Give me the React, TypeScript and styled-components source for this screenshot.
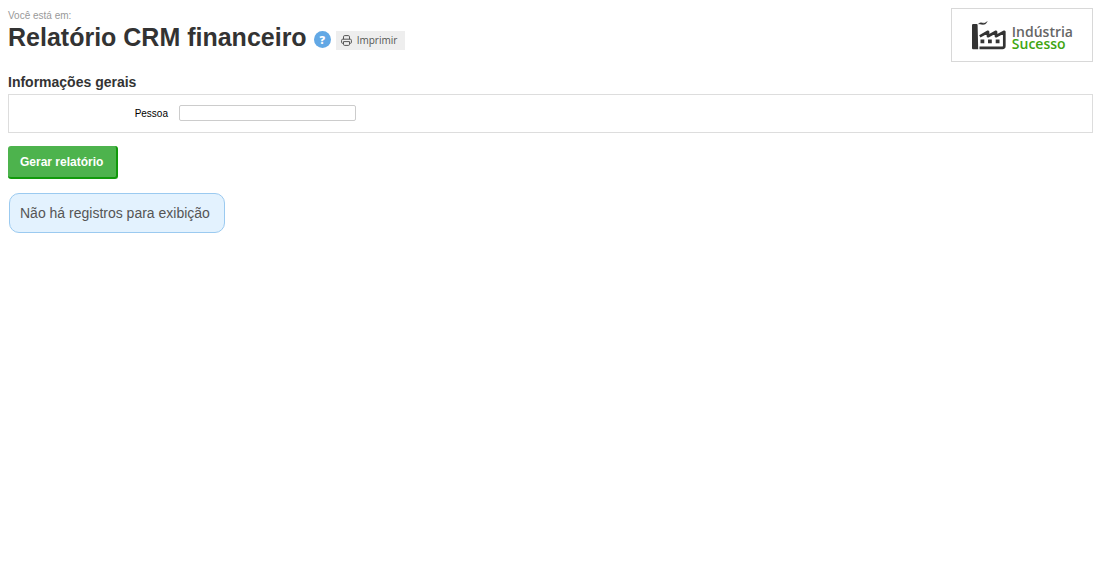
import React from 'react';
import styled, { createGlobalStyle } from 'styled-components';

const GlobalStyle = createGlobalStyle`
  *, *::before, *::after { box-sizing: border-box; }
  body {
    margin: 0;
    background: #fff;
    color: #333;
    font-family: Arial, "Liberation Sans", sans-serif;
  }
`;

const Page = styled.main`
  padding: 8px 11px 8px 8px;
`;

const Header = styled.header`
  display: flex;
  justify-content: space-between;
  align-items: flex-start;
`;

const Breadcrumb = styled.p`
  margin: 0;
  font-size: 10px;
  line-height: 15px;
  color: #999;
`;

const TitleRow = styled.div`
  display: flex;
  align-items: center;
`;

const Title = styled.h1`
  margin: 0 7px 0 0;
  font-size: 25px;
  line-height: 28px;
  font-weight: bold;
`;

const HelpButton = styled.button`
  display: flex;
  align-items: center;
  justify-content: center;
  width: 17px;
  height: 17px;
  margin: 4px 5px 0 0;
  padding: 0;
  border: 0;
  border-radius: 50%;
  background: #62a8e5;
  color: #fff;
  font: 800 11px/17px "Open Sans", sans-serif;
  cursor: pointer;
`;

const PrintButton = styled.button`
  display: flex;
  align-items: center;
  gap: 5px;
  height: 19px;
  margin-top: 6px;
  padding: 0 8px 0 5px;
  border: 0;
  background: #eee;
  color: #555;
  font: 10px/18px "Open Sans", sans-serif;
  cursor: pointer;
`;

const LogoBox = styled.div`
  display: flex;
  align-items: center;
  gap: 5px;
  height: 54px;
  padding: 0 19px 0 20px;
  border: 1px solid #d8d8d8;
`;

const LogoText = styled.div`
  display: grid;
  grid-auto-rows: 12px;
  padding-top: 6px;
  font: 600 14px/12px "Open Sans", sans-serif;
  color: #666;
`;

const LogoAccent = styled.strong`
  font-weight: 600;
  color: #40a510;
`;

const SectionTitle = styled.h2`
  margin: 12px 0 4px;
  font-size: 14px;
  line-height: 16px;
`;

const Panel = styled.div`
  display: flex;
  align-items: center;
  gap: 11px;
  padding: 10px 0 11px;
  border: 1px solid #ddd;
`;

const FieldLabel = styled.label`
  width: 159px;
  padding-top: 2px;
  text-align: right;
  font-size: 10px;
  line-height: 14px;
  color: #000;
`;

const TextInput = styled.input`
  width: 177px;
  height: 16px;
  padding: 0 4px;
  border: 1px solid #ccc;
  border-radius: 2px;
  background: #fff;
  font: 10px Arial, "Liberation Sans", sans-serif;
`;

const SubmitButton = styled.button`
  display: block;
  height: 33px;
  margin: 13px 0 14px;
  padding: 0 13px 0 12px;
  border: 0 solid #119a0b;
  border-width: 0 2px 2px 0;
  border-radius: 3px;
  background: #4db34d;
  color: #fff;
  font: bold 12px Arial, "Liberation Sans", sans-serif;
  cursor: pointer;
`;

const Notice = styled.p`
  width: fit-content;
  margin: 0 0 0 1px;
  padding: 11px 14px 11px 10px;
  border: 1px solid #9bcaf0;
  border-radius: 10px;
  background: #e3f2fe;
  color: #555;
  font-size: 14px;
  line-height: 16px;
`;

const PrinterIcon = () => (
  <svg width="11" height="11" viewBox="0 0 11 11" fill="none" stroke="#555" aria-hidden="true">
    <path d="M2.5 4.2V1.8Q2.5.6 3.7.6H7.3Q8.5.6 8.5 1.8V4.2M2.5 8.3H1.5Q.6 8.3.6 7.4V5.3Q.6 4.2 1.7 4.2H9.3Q10.4 4.2 10.4 5.3V7.4Q10.4 8.3 9.5 8.3H8.5M2.5 6.6H8.5V9.3Q8.5 10.4 7.4 10.4H3.6Q2.5 10.4 2.5 9.3Z" />
  </svg>
);

const FactoryLogo = () => (
  <svg width="35" height="30" viewBox="0 0 35 30" aria-hidden="true">
    <path d="M1.2 4H4.8Q5.6 4 5.6 5L6.2 29.3H1Q0 29.3 0 28V5Q0 4 1.2 4Z" fill="#333" />
    <path d="M6.5 3.8Q8.5 2 10.5 3T15.3 1.6Q13.8 5 10.5 4.4T6.5 3.8Z" fill="#333" stroke="#333" strokeWidth=".4" />
    <path d="M7.8 16.4L16 11.8V16.2L24 11.8V16.2L32.3 11.8V26Q32.3 27.8 30.5 27.8H7.5" fill="none" stroke="#333" strokeWidth="2.7" strokeLinejoin="round" />
    <path d="M8.5 19.6H12.3V23.2H8.5ZM16 19.6H19.8V23.2H16ZM23.7 19.6H27.5V23.2H23.7Z" fill="#333" />
  </svg>
);

export default function App() {
  return (
    <>
      <GlobalStyle />
      <Page>
        <Header>
          <div>
            <Breadcrumb>Você está em:</Breadcrumb>
            <TitleRow>
              <Title>Relatório CRM financeiro</Title>
              <HelpButton type="button" aria-label="Ajuda">?</HelpButton>
              <PrintButton type="button">
                <PrinterIcon />
                Imprimir
              </PrintButton>
            </TitleRow>
          </div>
          <LogoBox>
            <FactoryLogo />
            <LogoText>
              <span>Indústria</span>
              <LogoAccent>Sucesso</LogoAccent>
            </LogoText>
          </LogoBox>
        </Header>
        <form onSubmit={(event) => event.preventDefault()}>
          <SectionTitle>Informações gerais</SectionTitle>
          <Panel>
            <FieldLabel htmlFor="pessoa">Pessoa</FieldLabel>
            <TextInput id="pessoa" type="text" />
          </Panel>
          <SubmitButton type="submit">Gerar relatório</SubmitButton>
        </form>
        <Notice role="status">Não há registros para exibição</Notice>
      </Page>
    </>
  );
}
